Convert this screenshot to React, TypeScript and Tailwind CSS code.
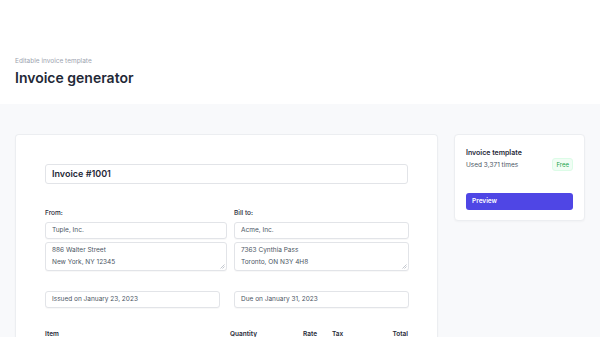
import React from "react";

const font = { fontFamily: "Inter, 'Noto Sans', sans-serif" };

function Field({ value }: { value: string }) {
  return (
    <div className="flex h-[17px] items-center rounded-[3px] border border-[#e2e4e8] bg-white px-[6px] text-[6.5px] text-[#4b5563] shadow-[0_1px_1px_rgba(0,0,0,0.03)]">
      {value}
    </div>
  );
}

function Area({ lines }: { lines: string[] }) {
  return (
    <div className="relative h-[29px] rounded-[3px] border border-[#e2e4e8] bg-white px-[6px] pt-[2px] text-[6.5px] leading-[11.5px] text-[#4b5563] shadow-[0_1px_1px_rgba(0,0,0,0.03)]">
      {lines.map((l) => (
        <div key={l}>{l}</div>
      ))}
      <svg
        className="absolute bottom-[1px] right-[1px]"
        width="5"
        height="5"
        viewBox="0 0 5 5"
      >
        <path d="M4.5 0.5 L0.5 4.5 M4.5 2.5 L2.5 4.5" stroke="#9ca3af" strokeWidth="0.6" />
      </svg>
    </div>
  );
}

export default function App() {
  return (
    <div className="h-[337px] w-[600px] overflow-hidden bg-white" style={font}>
      <div className="flex h-[104px] flex-col justify-end px-[15px] pb-[17px]">
        <div className="text-[6.5px] leading-[10px] text-[#9ca3af]">Editable invoice template</div>
        <div className="mt-[2px] text-[14px] font-semibold leading-[19px] text-[#1f2937]">
          Invoice generator
        </div>
      </div>
      <div className="flex h-[233px] gap-[16px] bg-[#f8f9fb] pl-[15px] pt-[30px]">
        <div className="w-[423px] rounded-t-[4px] border border-b-0 border-[#eceef1] bg-white px-[29px] pt-[29px] shadow-[0_1px_2px_rgba(0,0,0,0.03)]">
          <div className="flex h-[20px] items-center rounded-[3px] border border-[#e2e4e8] bg-white px-[6px] text-[9px] font-semibold text-[#1f2937]">
            Invoice #1001
          </div>
          <div className="mt-[24px] grid grid-cols-[182px_175px] gap-x-[7px]">
            <div>
              <div className="text-[6.5px] font-medium leading-[10px] text-[#1f2937]">From:</div>
              <div className="mt-[4px]">
                <Field value="Tuple, Inc." />
              </div>
              <div className="mt-[3px]">
                <Area lines={["886 Walter Street", "New York, NY 12345"]} />
              </div>
            </div>
            <div>
              <div className="text-[6.5px] font-medium leading-[10px] text-[#1f2937]">Bill to:</div>
              <div className="mt-[4px]">
                <Field value="Acme, Inc." />
              </div>
              <div className="mt-[3px]">
                <Area lines={["7363 Cynthia Pass", "Toronto, ON N3Y 4H8"]} />
              </div>
            </div>
          </div>
          <div className="mt-[20px] grid grid-cols-[175px_175px] gap-x-[14px]">
            <Field value="Issued on January 23, 2023" />
            <Field value="Due on January 31, 2023" />
          </div>
          <div className="mt-[21px] flex text-[6.5px] font-semibold leading-[10px] text-[#1f2937]">
            <div className="w-[185px]">Item</div>
            <div className="w-[73px]">Quantity</div>
            <div className="w-[29px]">Rate</div>
            <div className="w-[30px]">Tax</div>
            <div className="flex-1 text-right">Total</div>
          </div>
        </div>
        <div className="h-[87px] w-[131px] rounded-[4px] border border-[#eceef1] bg-white px-[11px] pt-[13px] shadow-[0_1px_2px_rgba(0,0,0,0.03)]">
          <div className="text-[7px] font-semibold leading-[10px] text-[#1f2937]">Invoice template</div>
          <div className="flex items-center justify-between">
            <div className="text-[6.5px] leading-[10px] text-[#4b5563]">Used 3,371 times</div>
            <div className="rounded-[3px] border border-[#dcfce7] bg-[#f0fdf4] px-[3px] py-[1.5px] text-[6px] leading-[8px] text-[#16a34a]">
              Free
            </div>
          </div>
          <div className="mt-[22px] flex h-[17px] items-center rounded-[3px] bg-[#4f46e5] px-[6px] text-[6.5px] font-semibold text-white">
            Preview
          </div>
        </div>
      </div>
    </div>
  );
}
